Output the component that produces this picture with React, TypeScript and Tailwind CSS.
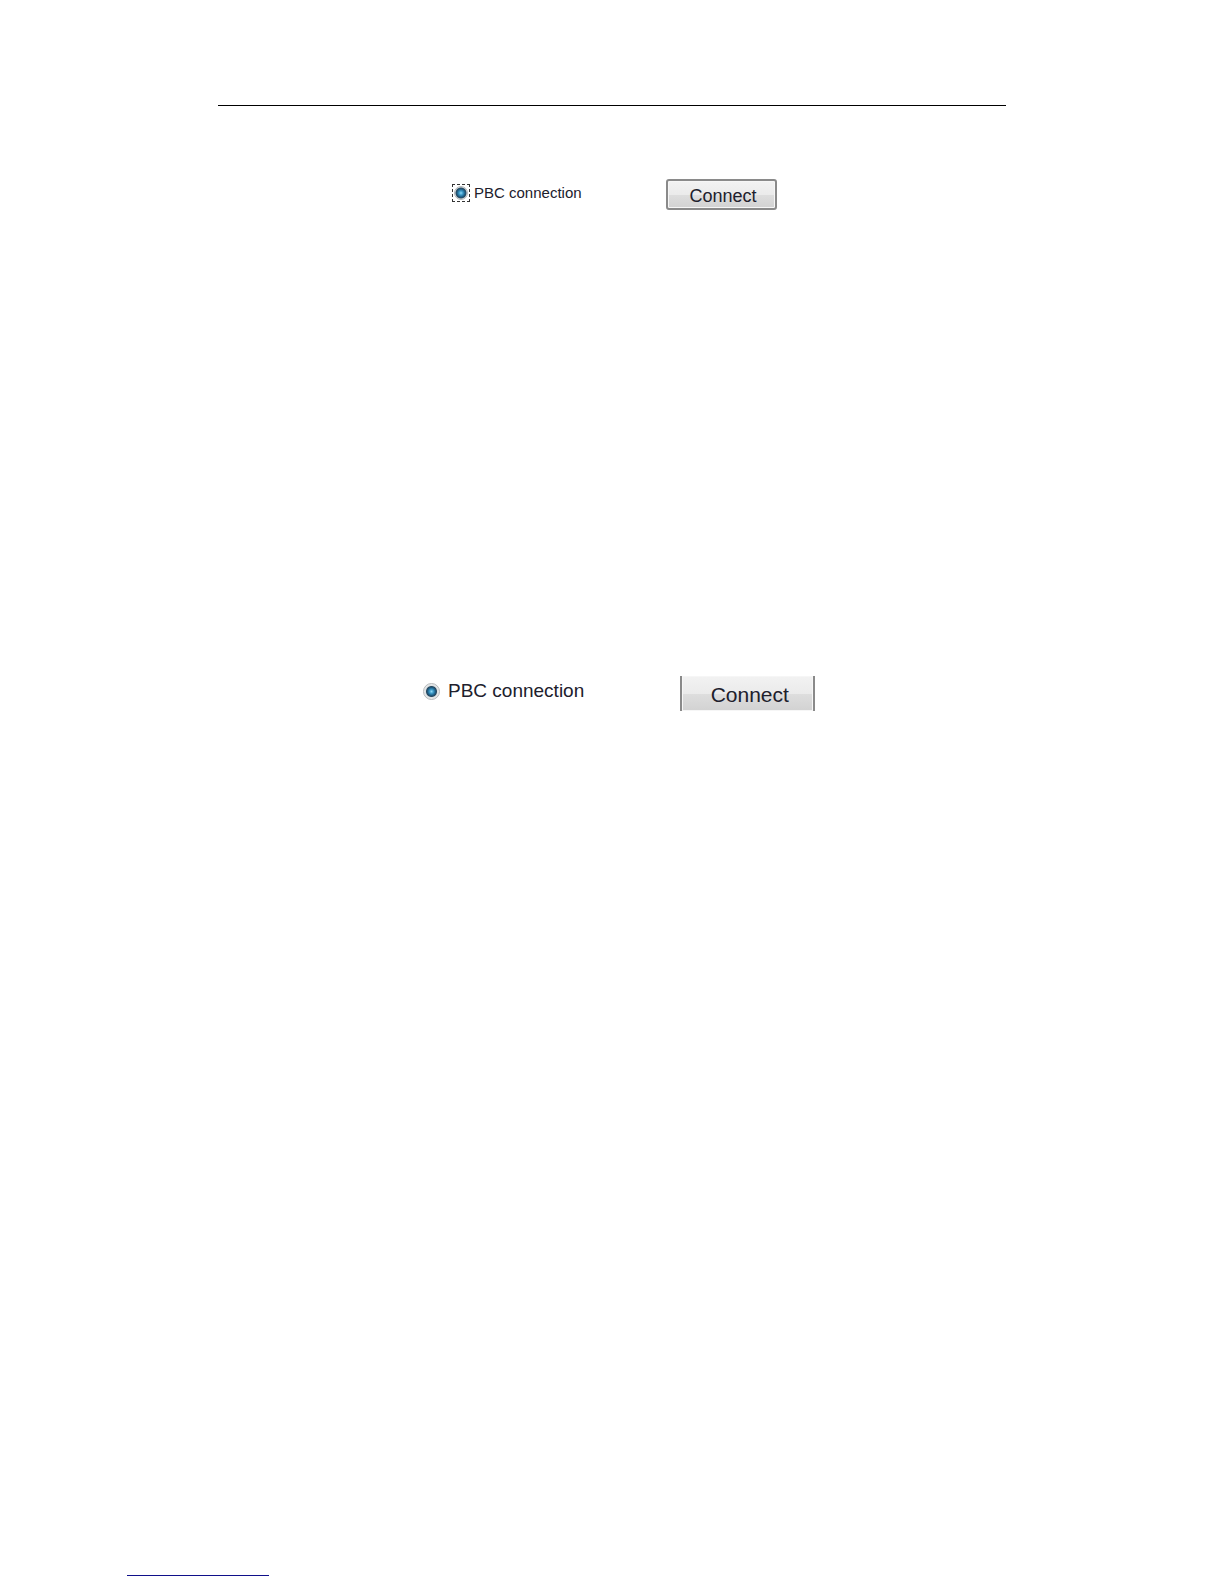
import { useState } from "react";

const radioDot =
    "appearance-none rounded-full border border-[#b4b8ba] bg-[radial-gradient(circle,#8fd8f5_0px,#3a98c6_2px,#1d5a80_4px,#2a4a60_5px,#dde1e3_6px,#f0f0f0_8px)]";

const buttonFace =
    "border-[#8a8a8a] bg-[linear-gradient(#f2f2f2,#ebebeb_50%,#dedede_50%,#d2d2d2)] pt-[3px] pl-1 shadow-[inset_0_0_0_1px_#f6f6f6]";

export default function App() {
    const [first, setFirst] = useState(true);
    const [second, setSecond] = useState(true);

    return (
        <div className="flex min-h-screen flex-col bg-white font-['Liberation_Sans',Arial,sans-serif] text-[#20202c]">
            <main className="mx-auto w-full max-w-[788px] flex-1 pt-[105px]">
                <hr className="border-t border-black" />

                {/* Small dialog row, radio has keyboard focus */}
                <section className="mt-[73px] flex items-start gap-[84px] pl-[234px]">
                    <label className="flex items-center gap-1 pt-1 text-[15px] leading-5 whitespace-nowrap">
                        <span className="flex size-[18px] items-center justify-center border border-dashed border-[#333]">
                            <input
                                type="radio"
                                name="pbc-small"
                                checked={first}
                                onChange={() => setFirst(true)}
                                className={`size-[14px] ${radioDot}`}
                            />
                        </span>
                        PBC connection
                    </label>
                    <button
                        className={`h-[31px] w-[111px] rounded-[3px] border-2 text-[18px] leading-6 ${buttonFace}`}
                    >
                        Connect
                    </button>
                </section>

                {/* Large dialog row */}
                <section className="mt-[466px] flex items-start gap-[96px] pl-[205px]">
                    <label className="flex items-center gap-2 text-[19px] leading-[30px] whitespace-nowrap">
                        <input
                            type="radio"
                            name="pbc-large"
                            checked={second}
                            onChange={() => setSecond(true)}
                            className={`size-[17px] ${radioDot}`}
                        />
                        PBC connection
                    </label>
                    <button
                        className={`h-[35px] w-[135px] border-x-2 text-[21px] leading-8 ${buttonFace}`}
                    >
                        Connect
                    </button>
                </section>
            </main>

            <footer className="pb-2 pl-[127px]">
                <a
                    href="#"
                    aria-label="Website"
                    className="block h-4 w-[142px] border-b border-[#10108a]"
                />
            </footer>
        </div>
    );
}
